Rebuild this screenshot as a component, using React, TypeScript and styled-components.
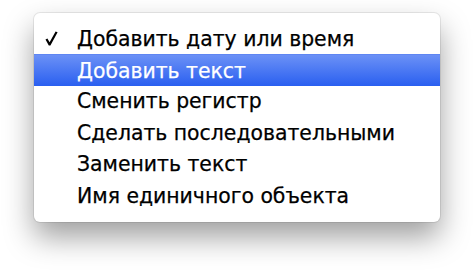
import React from "react";
import styled, { createGlobalStyle } from "styled-components";

const Global = createGlobalStyle`
  html, body { margin: 0; padding: 0; background: #ffffff; }
  body { width: 474px; height: 276px; overflow: hidden; }
`;

const Page = styled.div`
  width: 474px;
  height: 276px;
  padding: 13px 34px 0 34px;
  box-sizing: border-box;
  background: #ffffff;
`;

const Menu = styled.ul`
  list-style: none;
  margin: 0;
  padding: 10px 0 11px 0;
  width: 406px;
  box-sizing: border-box;
  background: #ffffff;
  border-radius: 6px;
  box-shadow: 0 0 0 1px rgba(0, 0, 0, 0.08), 0 15px 30px rgba(0, 0, 0, 0.38);
  font-family: "DejaVu Sans", sans-serif;
  font-size: 20.4px;
  color: #000000;
`;

const Item = styled.li<{ $active?: boolean }>`
  display: flex;
  align-items: center;
  height: 31.4px;
  padding-left: 11px;
  color: ${(p) => (p.$active ? "#ffffff" : "#000000")};
  background: ${(p) =>
    p.$active ? "linear-gradient(#6b91f6, #2a5ff0)" : "transparent"};
  border-top: ${(p) => (p.$active ? "1px solid #5f86f2" : "none")};
  box-sizing: border-box;
  -webkit-text-stroke: 0.25px currentColor;
`;

const CheckSlot = styled.span`
  display: flex;
  align-items: center;
  width: 32px;
  flex: 0 0 32px;
`;

const CheckMark = () => (
  <svg width="13" height="15" viewBox="0 0 13 15">
    <path
      d="M0.5 8.6 L2.4 7.6 L4.6 11.2 L10.6 0.4 L12.6 1.2 L5.4 14.6 L3.8 14.6 Z"
      fill="#000"
    />
  </svg>
);

const items = [
  { label: "Добавить дату или время", checked: true },
  { label: "Добавить текст", active: true },
  { label: "Сменить регистр" },
  { label: "Сделать последовательными" },
  { label: "Заменить текст" },
  { label: "Имя единичного объекта" },
];

export default function App() {
  return (
    <Page>
      <Global />
      <Menu>
        {items.map((it) => (
          <Item key={it.label} $active={it.active}>
            <CheckSlot>{it.checked ? <CheckMark /> : null}</CheckSlot>
            <span>{it.label}</span>
          </Item>
        ))}
      </Menu>
    </Page>
  );
}
